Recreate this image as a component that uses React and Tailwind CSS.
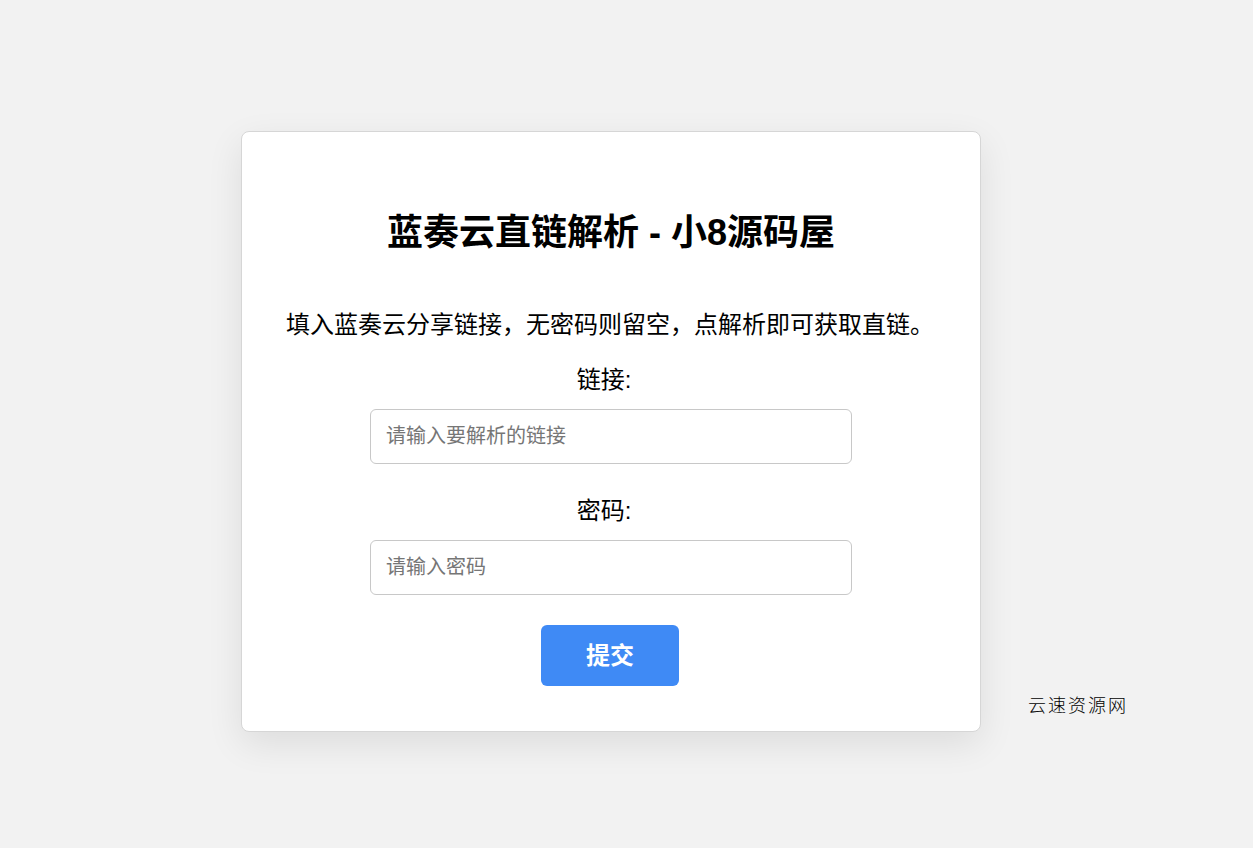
import { useState } from "react";

const font = {
  fontFamily: '"Liberation Sans", "Noto Sans CJK SC", sans-serif',
};

export default function App() {
  const [url, setUrl] = useState("");
  const [pwd, setPwd] = useState("");

  return (
    <div className="min-h-screen bg-[#f2f2f2] pt-[131px] pl-[241px]" style={font}>
      <div className="flex items-end">
        <div className="w-[740px] bg-white border border-[#d6d6d6] rounded-[8px] shadow-[0_12px_36px_rgba(0,0,0,0.09)] flex flex-col items-center pt-[81px] pb-[45px]">
          {/* title */}
          <h1 className="text-[36px] leading-[40px] font-bold text-black">
            蓝奏云直链解析 - 小8源码屋
          </h1>

          <p className="mt-[54px] text-[24px] leading-[36px] text-black -ml-[2px]">
            填入蓝奏云分享链接，无密码则留空，点解析即可获取直链。
          </p>

          <label className="mt-[20px] text-[24px] leading-[34px] text-black -ml-[14px]">
            链接:
          </label>
          <input
            value={url}
            onChange={(e) => setUrl(e.target.value)}
            placeholder="请输入要解析的链接"
            className="mt-[12px] w-[482px] h-[55px] border border-[#c8c8c8] rounded-[6px] px-[15px] text-[20px] text-black placeholder:text-[#767676] outline-none"
          />

          <label className="mt-[30px] text-[24px] leading-[34px] text-black -ml-[14px]">
            密码:
          </label>
          <input
            value={pwd}
            onChange={(e) => setPwd(e.target.value)}
            placeholder="请输入密码"
            className="mt-[12px] w-[482px] h-[55px] border border-[#c8c8c8] rounded-[6px] px-[15px] text-[20px] text-black placeholder:text-[#767676] outline-none"
          />

          <button className="mt-[30px] w-[138px] h-[61px] bg-[#3f8af5] rounded-[6px] text-white text-[24px] font-bold -ml-[2px]">
            提交
          </button>
        </div>

        <div className="ml-[47px] mb-[15px] text-[18px] leading-[22px] tracking-[2px] text-black font-light">
          云速资源网
        </div>
      </div>
    </div>
  );
}
